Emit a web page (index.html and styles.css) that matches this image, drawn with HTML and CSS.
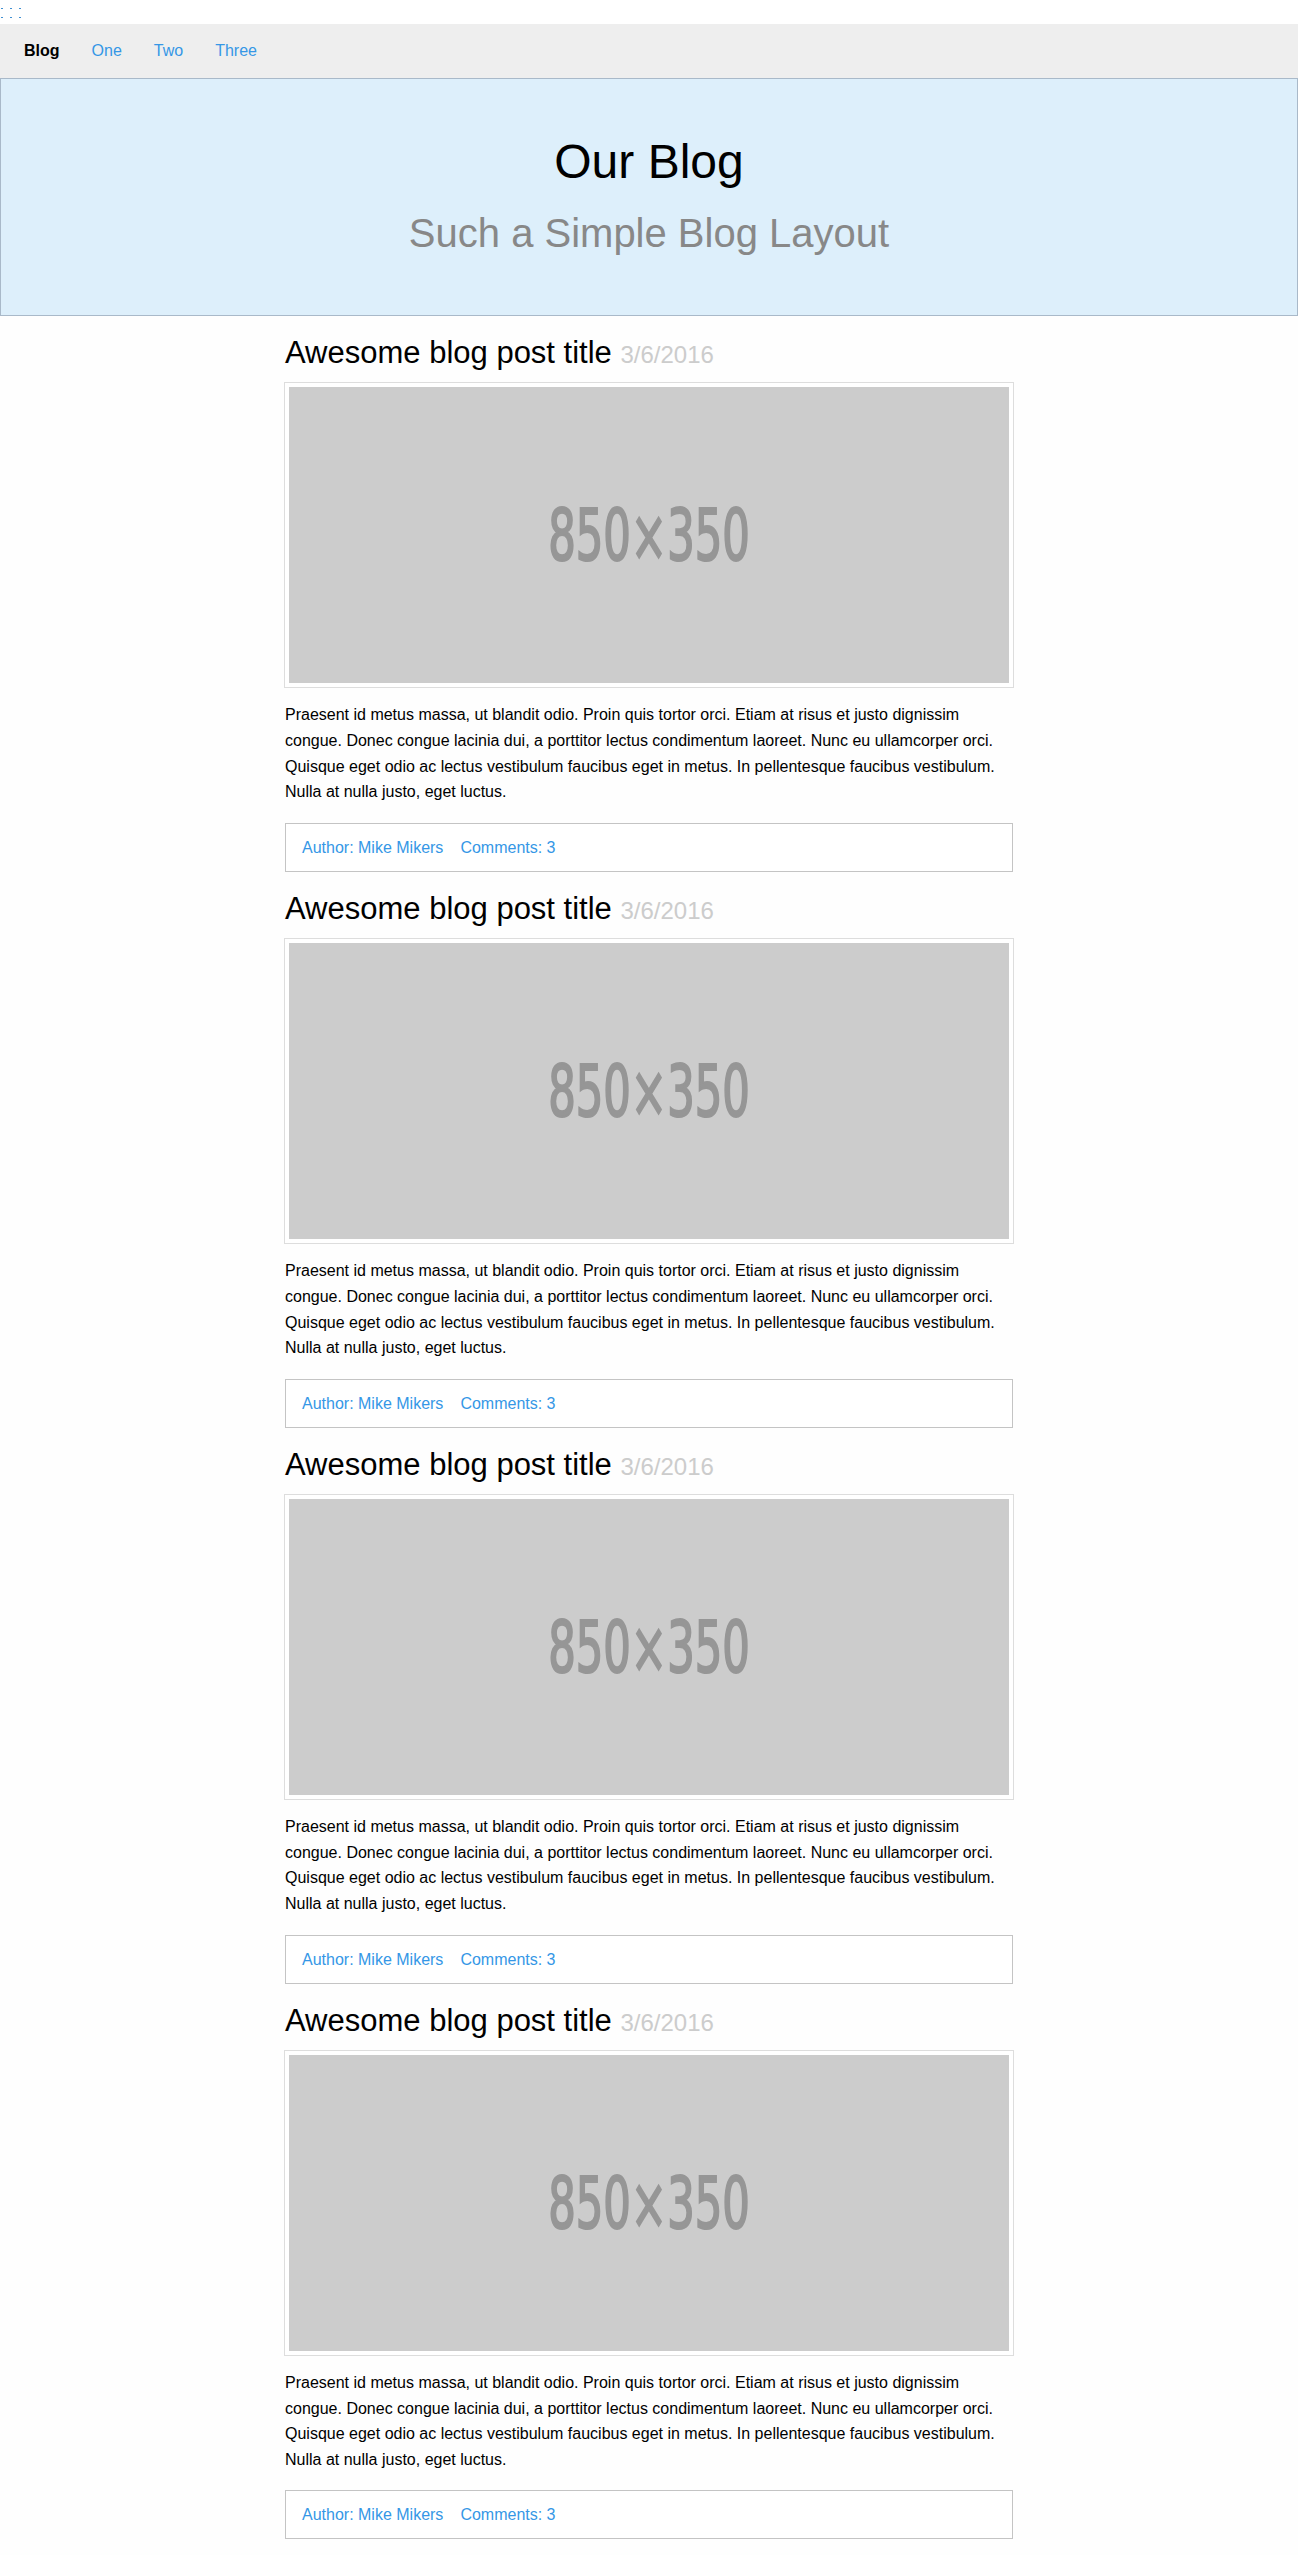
FILE: index.html
```html
<!DOCTYPE html>
<html lang="en">
<head>
<meta charset="utf-8">
<title>Our Blog</title>
<link rel="stylesheet" href="styles.css">
</head>
<body>
<div class="handle">
  <svg width="24" height="24" viewBox="0 0 24 24">
    <g fill="#3f8fd2">
      <rect x="1" y="8" width="2" height="1"/><rect x="10" y="8" width="2" height="1"/><rect x="19" y="8" width="2" height="1"/>
      <rect x="1" y="17" width="2" height="1"/><rect x="10" y="17" width="2" height="1"/><rect x="19" y="17" width="2" height="1"/>
    </g>
  </svg>
</div>
<nav class="topnav">
  <a class="brand" href="#">Blog</a>
  <a href="#">One</a>
  <a href="#">Two</a>
  <a href="#">Three</a>
</nav>
<header class="hero">
  <h1 class="hero-title">Our Blog</h1>
  <p class="hero-tagline">Such a Simple Blog Layout</p>
</header>
<main class="posts">
  <article class="post">
    <h2 class="post-title">Awesome blog post title <small class="post-date">3/6/2016</small></h2>
    <div class="thumb"><svg class="placeholder" viewBox="0 0 850 350"><rect width="850" height="350" fill="#cccccc"/><text x="425" y="204" text-anchor="middle" textLength="238" lengthAdjust="spacingAndGlyphs" class="ph-text">850×350</text></svg></div>
    <p class="post-body">Praesent id metus massa, ut blandit odio. Proin quis tortor orci. Etiam at risus et justo dignissim congue. Donec congue lacinia dui, a porttitor lectus condimentum laoreet. Nunc eu ullamcorper orci. Quisque eget odio ac lectus vestibulum faucibus eget in metus. In pellentesque faucibus vestibulum. Nulla at nulla justo, eget luctus.</p>
    <div class="post-meta"><a href="#">Author: Mike Mikers</a><a href="#">Comments: 3</a></div>
  </article>
  <article class="post">
    <h2 class="post-title">Awesome blog post title <small class="post-date">3/6/2016</small></h2>
    <div class="thumb"><svg class="placeholder" viewBox="0 0 850 350"><rect width="850" height="350" fill="#cccccc"/><text x="425" y="204" text-anchor="middle" textLength="238" lengthAdjust="spacingAndGlyphs" class="ph-text">850×350</text></svg></div>
    <p class="post-body">Praesent id metus massa, ut blandit odio. Proin quis tortor orci. Etiam at risus et justo dignissim congue. Donec congue lacinia dui, a porttitor lectus condimentum laoreet. Nunc eu ullamcorper orci. Quisque eget odio ac lectus vestibulum faucibus eget in metus. In pellentesque faucibus vestibulum. Nulla at nulla justo, eget luctus.</p>
    <div class="post-meta"><a href="#">Author: Mike Mikers</a><a href="#">Comments: 3</a></div>
  </article>
  <article class="post">
    <h2 class="post-title">Awesome blog post title <small class="post-date">3/6/2016</small></h2>
    <div class="thumb"><svg class="placeholder" viewBox="0 0 850 350"><rect width="850" height="350" fill="#cccccc"/><text x="425" y="204" text-anchor="middle" textLength="238" lengthAdjust="spacingAndGlyphs" class="ph-text">850×350</text></svg></div>
    <p class="post-body">Praesent id metus massa, ut blandit odio. Proin quis tortor orci. Etiam at risus et justo dignissim congue. Donec congue lacinia dui, a porttitor lectus condimentum laoreet. Nunc eu ullamcorper orci. Quisque eget odio ac lectus vestibulum faucibus eget in metus. In pellentesque faucibus vestibulum. Nulla at nulla justo, eget luctus.</p>
    <div class="post-meta"><a href="#">Author: Mike Mikers</a><a href="#">Comments: 3</a></div>
  </article>
  <article class="post">
    <h2 class="post-title">Awesome blog post title <small class="post-date">3/6/2016</small></h2>
    <div class="thumb"><svg class="placeholder" viewBox="0 0 850 350"><rect width="850" height="350" fill="#cccccc"/><text x="425" y="204" text-anchor="middle" textLength="238" lengthAdjust="spacingAndGlyphs" class="ph-text">850×350</text></svg></div>
    <p class="post-body">Praesent id metus massa, ut blandit odio. Proin quis tortor orci. Etiam at risus et justo dignissim congue. Donec congue lacinia dui, a porttitor lectus condimentum laoreet. Nunc eu ullamcorper orci. Quisque eget odio ac lectus vestibulum faucibus eget in metus. In pellentesque faucibus vestibulum. Nulla at nulla justo, eget luctus.</p>
    <div class="post-meta"><a href="#">Author: Mike Mikers</a><a href="#">Comments: 3</a></div>
  </article>
</main>
</body>
</html>
```

FILE: styles.css
```css
body {
  margin: 0;
  font-family: "Liberation Sans", Arial, sans-serif;
  background: #fefefe;
  color: #000;
}

.handle {
  height: 24px;
  background: #fff;
}

.handle svg {
  display: block;
}

.topnav {
  display: flex;
  height: 54px;
  line-height: 54px;
  padding-left: 8px;
  background: #eeeeee;
  font-size: 16px;
}

.topnav a {
  padding: 0 16px;
  color: #3597e6;
  text-decoration: none;
}

.topnav .brand {
  color: #000;
  font-weight: bold;
}

.hero {
  border: 1px solid #a9b9c9;
  background: #ddeffb;
  text-align: center;
  padding: 56px 0 59px;
}

.hero-title {
  margin: 0;
  font-size: 48px;
  line-height: 54px;
  font-weight: normal;
}

.hero-tagline {
  margin: 21px 0 0;
  font-size: 40px;
  line-height: 46px;
  color: #888888;
}

.posts {
  width: 728px;
  margin: 0 auto;
  padding-bottom: 18px;
}

.post {
  padding-top: 20px;
}

.post-title {
  margin: 0 0 13px;
  font-size: 31px;
  line-height: 33px;
  font-weight: normal;
}

.post-date {
  font-size: 24px;
  line-height: 1;
  color: #cccccc;
}

.thumb {
  margin: 0 -1px;
  border: 1px solid #dddddd;
  padding: 4px;
  background: #fff;
}

.placeholder {
  display: block;
  width: 100%;
  height: auto;
}

.ph-text {
  font-family: "Liberation Sans Narrow", "DejaVu Sans Condensed", "Liberation Sans", sans-serif;
  font-size: 84px;
  fill: #969696;
  stroke: #969696;
  stroke-width: 2.5;
}

.post-body {
  margin: 14px 0 18px;
  font-size: 16px;
  line-height: 1.6;
}

.post-meta {
  display: flex;
  gap: 17px;
  border: 1px solid #c4c4c4;
  padding: 11px 16px;
  line-height: 25px;
  font-size: 16px;
  background: #fff;
}

.post-meta a {
  color: #3597e6;
  text-decoration: none;
}
```
